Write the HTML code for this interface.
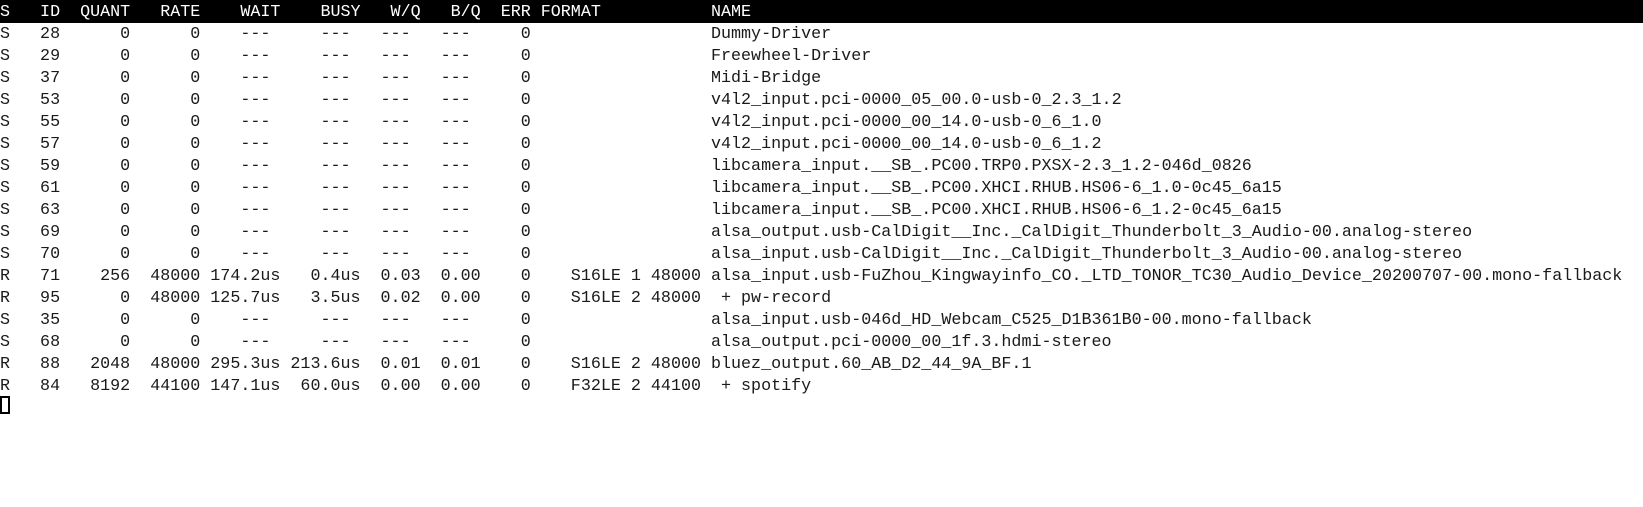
<!DOCTYPE html>
<html><head><meta charset="utf-8"><style>
html,body{margin:0;padding:0;background:#fff;width:1643px;height:507px;overflow:hidden}
.bar{position:absolute;left:0;top:0;width:1643px;height:23px;background:#000}
pre{position:absolute;left:0;top:2px;margin:0;font-family:"Liberation Mono","DejaVu Sans Mono",monospace;font-size:16.7px;line-height:22px;color:#1a1a1a;white-space:pre}
.h{color:#fff}
.cur{position:absolute;left:0;top:396px;width:6px;height:14px;border:2px solid #000}
</style></head><body>
<div class="bar"></div>
<pre><span class="h">S   ID  QUANT   RATE    WAIT    BUSY   W/Q   B/Q  ERR FORMAT           NAME</span>
S   28      0      0    ---     ---   ---   ---     0                  Dummy-Driver
S   29      0      0    ---     ---   ---   ---     0                  Freewheel-Driver
S   37      0      0    ---     ---   ---   ---     0                  Midi-Bridge
S   53      0      0    ---     ---   ---   ---     0                  v4l2_input.pci-0000_05_00.0-usb-0_2.3_1.2
S   55      0      0    ---     ---   ---   ---     0                  v4l2_input.pci-0000_00_14.0-usb-0_6_1.0
S   57      0      0    ---     ---   ---   ---     0                  v4l2_input.pci-0000_00_14.0-usb-0_6_1.2
S   59      0      0    ---     ---   ---   ---     0                  libcamera_input.__SB_.PC00.TRP0.PXSX-2.3_1.2-046d_0826
S   61      0      0    ---     ---   ---   ---     0                  libcamera_input.__SB_.PC00.XHCI.RHUB.HS06-6_1.0-0c45_6a15
S   63      0      0    ---     ---   ---   ---     0                  libcamera_input.__SB_.PC00.XHCI.RHUB.HS06-6_1.2-0c45_6a15
S   69      0      0    ---     ---   ---   ---     0                  alsa_output.usb-CalDigit__Inc._CalDigit_Thunderbolt_3_Audio-00.analog-stereo
S   70      0      0    ---     ---   ---   ---     0                  alsa_input.usb-CalDigit__Inc._CalDigit_Thunderbolt_3_Audio-00.analog-stereo
R   71    256  48000 174.2us   0.4us  0.03  0.00    0    S16LE 1 48000 alsa_input.usb-FuZhou_Kingwayinfo_CO._LTD_TONOR_TC30_Audio_Device_20200707-00.mono-fallback
R   95      0  48000 125.7us   3.5us  0.02  0.00    0    S16LE 2 48000  + pw-record
S   35      0      0    ---     ---   ---   ---     0                  alsa_input.usb-046d_HD_Webcam_C525_D1B361B0-00.mono-fallback
S   68      0      0    ---     ---   ---   ---     0                  alsa_output.pci-0000_00_1f.3.hdmi-stereo
R   88   2048  48000 295.3us 213.6us  0.01  0.01    0    S16LE 2 48000 bluez_output.60_AB_D2_44_9A_BF.1
R   84   8192  44100 147.1us  60.0us  0.00  0.00    0    F32LE 2 44100  + spotify
</pre>
<div class="cur"></div>
</body></html>
